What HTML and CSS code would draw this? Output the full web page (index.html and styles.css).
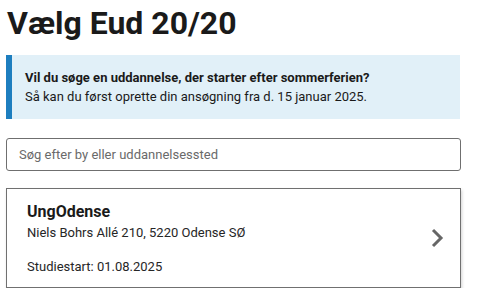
FILE: index.html
```html
<!DOCTYPE html>
<html lang="da">
<head>
<meta charset="utf-8">
<title>Vælg Eud 20/20</title>
<link rel="stylesheet" href="styles.css">
</head>
<body>
<main class="page">
  <h1 class="title">Vælg Eud 20/20</h1>
  <div class="notice">
    <p class="notice-strong">Vil du søge en uddannelse, der starter efter sommerferien?</p>
    <p class="notice-text">Så kan du først oprette din ansøgning fra d. 15 januar 2025.</p>
  </div>
  <input class="search" type="text" placeholder="Søg efter by eller uddannelsessted">
  <a class="card" href="#">
    <div class="card-body">
      <div class="card-title">UngOdense</div>
      <div class="card-address">Niels Bohrs Allé 210, 5220 Odense SØ</div>
      <div class="card-start">Studiestart: 01.08.2025</div>
    </div>
    <svg class="chevron" width="14" height="20" viewBox="0 0 14 20" aria-hidden="true">
      <path d="M3 2 L11 10 L3 18" fill="none" stroke="#666" stroke-width="3"/>
    </svg>
  </a>
</main>
</body>
</html>
```
FILE: styles.css
```css
* { box-sizing: border-box; }
html, body { margin: 0; padding: 0; background: #fff; }
body {
  font-family: Roboto, "Liberation Sans", sans-serif;
  color: #1a1a1a;
}
.page {
  width: 455px;
  margin-left: 6px;
  display: flex;
  flex-direction: column;
}
.title {
  font-family: Roboto, sans-serif;
  font-size: 32px;
  font-weight: 700;
  line-height: 40px;
  margin: 3px 0 12px 1px;
  color: #1a1a1a;
}
.notice {
  background: #e1f0f8;
  border-left: 6px solid #1d7ebf;
  padding: 13px 14px 13px 13px;
  width: 454px;
}
.notice p { margin: 0; font-size: 13px; line-height: 19px; color: #1a1a1a; }
.notice-strong { font-weight: 700; }
.search {
  margin-top: 19px;
  height: 33px;
  width: 455px;
  border: 1px solid #6f6f6f;
  border-radius: 3px;
  padding: 0 12px;
  font-family: inherit;
  font-size: 13px;
  color: #1a1a1a;
  outline: none;
}
.search::placeholder { color: #6a6a6a; }
.card {
  margin-top: 17px;
  height: 100px;
  border: 1px solid #707070;
  box-shadow: 1px 2px 3px rgba(0,0,0,0.18);
  display: flex;
  align-items: center;
  justify-content: space-between;
  padding: 0 16px 0 20px;
  text-decoration: none;
  color: #1a1a1a;
}
.card-title { font-size: 16px; font-weight: 700; line-height: 22px; }
.card-address { font-size: 13px; line-height: 19px; color: #262626; }
.card-start { font-size: 13px; line-height: 19px; margin-top: 15px; color: #262626; }
.chevron { display: block; }
```
